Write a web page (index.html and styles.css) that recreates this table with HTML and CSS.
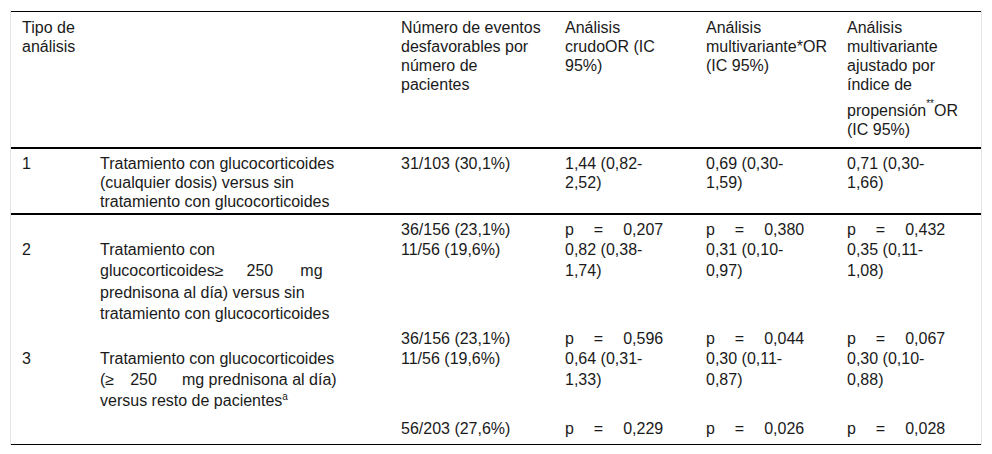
FILE: index.html
```html
<!DOCTYPE html>
<html lang="es">
<head>
<meta charset="utf-8">
<title>Tabla</title>
<link rel="stylesheet" href="styles.css">
</head>
<body>
<div class="wrap">
<table class="tbl">
<colgroup>
<col class="c1"><col class="c2"><col class="c3"><col class="c4"><col class="c5"><col class="c6">
</colgroup>
<thead>
<tr>
<th>Tipo de<br>análisis</th>
<th></th>
<th>Número de eventos<br>desfavorables por<br>número de<br>pacientes</th>
<th>Análisis<br>crudoOR (IC<br>95%)</th>
<th>Análisis<br>multivariante*OR<br>(IC 95%)</th>
<th>Análisis<br>multivariante<br>ajustado por<br>índice de<br>propensión<sup>**</sup>OR<br>(IC 95%)</th>
</tr>
</thead>
<tbody class="g1">
<tr>
<td>1</td>
<td>Tratamiento con glucocorticoides<br>(cualquier dosis) versus sin<br>tratamiento con glucocorticoides</td>
<td>31/103 (30,1%)</td>
<td>1,44 (0,82-<br>2,52)</td>
<td>0,69 (0,30-<br>1,59)</td>
<td>0,71 (0,30-<br>1,66)</td>
</tr>
</tbody>
<tbody class="g2">
<tr class="pr">
<td></td>
<td></td>
<td>36/156 (23,1%)</td>
<td><span class="pv">p = 0,207</span></td>
<td><span class="pv">p = 0,380</span></td>
<td><span class="pv">p = 0,432</span></td>
</tr>
<tr class="dr">
<td>2</td>
<td>Tratamiento con<br>glucocorticoides≥<span class="gA"> </span>250<span class="gB"> </span>mg<br>prednisona al día) versus sin<br>tratamiento con glucocorticoides</td>
<td>11/56 (19,6%)</td>
<td>0,82 (0,38-<br>1,74)</td>
<td>0,31 (0,10-<br>0,97)</td>
<td>0,35 (0,11-<br>1,08)</td>
</tr>
<tr class="pr">
<td></td>
<td></td>
<td>36/156 (23,1%)</td>
<td><span class="pv">p = 0,596</span></td>
<td><span class="pv">p = 0,044</span></td>
<td><span class="pv">p = 0,067</span></td>
</tr>
<tr class="dr dr3">
<td>3</td>
<td>Tratamiento con glucocorticoides<br>(≥<span class="gC"> </span>250<span class="gD"> </span>mg prednisona al día)<br>versus resto de pacientes<sup>a</sup></td>
<td>11/56 (19,6%)</td>
<td>0,64 (0,31-<br>1,33)</td>
<td>0,30 (0,11-<br>0,87)</td>
<td>0,30 (0,10-<br>0,88)</td>
</tr>
<tr class="pr last">
<td></td>
<td></td>
<td>56/203 (27,6%)</td>
<td><span class="pv">p = 0,229</span></td>
<td><span class="pv">p = 0,026</span></td>
<td><span class="pv">p = 0,028</span></td>
</tr>
</tbody>
</table>
</div>
</body>
</html>
```
FILE: styles.css
```css
html, body {
  margin: 0;
  padding: 0;
  background: #ffffff;
}

body {
  font-family: "Liberation Sans", Arial, sans-serif;
  font-size: 16px;
  color: #1a1a1a;
}

.wrap {
  margin: 10px 0 0 10px;
  width: 970px;
  padding-top: 1px;
  border-left: 1px solid #e4e4e4;
  border-right: 1px solid #e4e4e4;
}

.tbl {
  width: 970px;
  table-layout: fixed;
  border-collapse: collapse;
  border-spacing: 0;
}

.c1 { width: 78px; }
.c2 { width: 301px; }
.c3 { width: 164px; }
.c4 { width: 141px; }
.c5 { width: 141px; }
.c6 { width: 145px; }

.tbl th,
.tbl td {
  text-align: left;
  vertical-align: top;
  font-weight: normal;
  line-height: 19px;
  padding: 0 6px 0 11px;
  white-space: nowrap;
}

.tbl thead tr {
  border-top: 1px solid #000;
  border-bottom: 2px solid #000;
}

.tbl thead th {
  padding-top: 5.5px;
  padding-bottom: 8.5px;
}

.tbl thead sup {
  font-size: 10px;
  line-height: 19px;
  vertical-align: 9px;
}

.tbl .g1 tr {
  border-bottom: 2px solid #000;
}

.tbl .g1 td {
  padding-top: 4.5px;
  padding-bottom: 2.5px;
}

.tbl tr.pr td {
  padding-top: 4.5px;
}

.tbl tr.dr td {
  line-height: 21.5px;
}

.tbl tr.dr3 td {
  line-height: 21px;
}

.tbl tr.last {
  border-bottom: 1px solid #000;
}

.tbl tr.last td {
  padding-top: 8px;
  padding-bottom: 5.5px;
}

.pv {
  word-spacing: 15.5px;
}

.gA { word-spacing: 18.6px; }
.gB { word-spacing: 22.6px; }
.gC { word-spacing: 11.6px; }
.gD { word-spacing: 20.6px; }

.tbl tbody sup {
  font-size: 10px;
  line-height: 0;
  vertical-align: 6px;
}
```
